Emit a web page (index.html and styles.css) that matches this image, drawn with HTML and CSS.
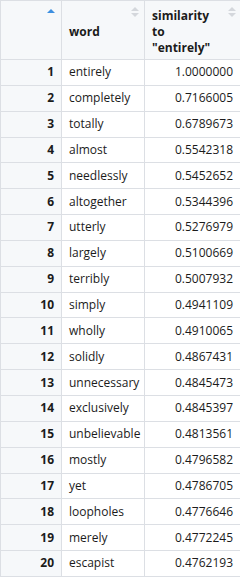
FILE: index.html
```html
<!DOCTYPE html>
<html>
<head>
<meta charset="utf-8">
<link rel="stylesheet" href="styles.css">
</head>
<body>
<table class="grid">
  <colgroup><col class="c-idx"><col class="c-word"><col class="c-sim"></colgroup>
  <thead>
    <tr>
      <th class="idx"><span class="sort-up"></span></th>
      <th class="word-h">word<span class="sort-both"></span></th>
      <th class="sim-h">similarity<br>to<br>"entirely"<span class="sort-both"></span></th>
    </tr>
  </thead>
  <tbody>
    <tr><td class="idx">1</td><td class="word">entirely</td><td class="num">1.0000000</td></tr>
    <tr><td class="idx">2</td><td class="word">completely</td><td class="num">0.7166005</td></tr>
    <tr><td class="idx">3</td><td class="word">totally</td><td class="num">0.6789673</td></tr>
    <tr><td class="idx">4</td><td class="word">almost</td><td class="num">0.5542318</td></tr>
    <tr><td class="idx">5</td><td class="word">needlessly</td><td class="num">0.5452652</td></tr>
    <tr><td class="idx">6</td><td class="word">altogether</td><td class="num">0.5344396</td></tr>
    <tr><td class="idx">7</td><td class="word">utterly</td><td class="num">0.5276979</td></tr>
    <tr><td class="idx">8</td><td class="word">largely</td><td class="num">0.5100669</td></tr>
    <tr><td class="idx">9</td><td class="word">terribly</td><td class="num">0.5007932</td></tr>
    <tr><td class="idx">10</td><td class="word">simply</td><td class="num">0.4941109</td></tr>
    <tr><td class="idx">11</td><td class="word">wholly</td><td class="num">0.4910065</td></tr>
    <tr><td class="idx">12</td><td class="word">solidly</td><td class="num">0.4867431</td></tr>
    <tr><td class="idx">13</td><td class="word">unnecessary</td><td class="num">0.4845473</td></tr>
    <tr><td class="idx">14</td><td class="word">exclusively</td><td class="num">0.4845397</td></tr>
    <tr><td class="idx">15</td><td class="word">unbelievable</td><td class="num">0.4813561</td></tr>
    <tr><td class="idx">16</td><td class="word">mostly</td><td class="num">0.4796582</td></tr>
    <tr><td class="idx">17</td><td class="word">yet</td><td class="num">0.4786705</td></tr>
    <tr><td class="idx">18</td><td class="word">loopholes</td><td class="num">0.4776646</td></tr>
    <tr><td class="idx">19</td><td class="word">merely</td><td class="num">0.4772245</td></tr>
    <tr><td class="idx">20</td><td class="word">escapist</td><td class="num">0.4762193</td></tr>
  </tbody>
</table>
</body>
</html>
```
FILE: styles.css
```css
html, body {
  margin: 0;
  padding: 0;
  background: #ffffff;
}
.grid {
  border-collapse: collapse;
  table-layout: fixed;
  width: 241px;
  font-family: "Open Sans", "Noto Sans", sans-serif;
  font-size: 12px;
  color: #1b1b1b;
}
.c-idx { width: 61px; }
.c-word { width: 83px; }
.c-sim { width: 97px; }
.grid th, .grid td {
  border: 1px solid #dcdfe4;
  padding: 0 8px 0 7px;
}
.grid th {
  position: relative;
  background: #f6f8fa;
  height: 55px;
  padding-top: 3px;
  text-align: left;
  vertical-align: middle;
  font-weight: bold;
  line-height: 16px;
}
.grid td {
  height: 24.85px;
  line-height: 16px;
  vertical-align: middle;
}
.grid td.idx {
  background: #f6f8fa;
  text-align: right;
  font-weight: bold;
  padding-right: 7px;
}
.grid td.num {
  text-align: right;
  padding-right: 8px;
}
.sort-up {
  position: absolute;
  right: 6px;
  top: 8px;
  width: 0;
  height: 0;
  border-left: 4px solid transparent;
  border-right: 4px solid transparent;
  border-bottom: 4px solid #3d8fe0;
}
.sort-both {
  position: absolute;
  right: 5px;
  top: 6px;
  width: 8px;
  height: 10px;
}
.sort-both::before, .sort-both::after {
  content: "";
  position: absolute;
  left: 0;
  width: 0;
  height: 0;
  border-left: 4px solid transparent;
  border-right: 4px solid transparent;
}
.sort-both::before {
  top: 0;
  border-bottom: 4px solid #d4d7dc;
}
.sort-both::after {
  top: 6px;
  border-top: 4px solid #d4d7dc;
}
```
